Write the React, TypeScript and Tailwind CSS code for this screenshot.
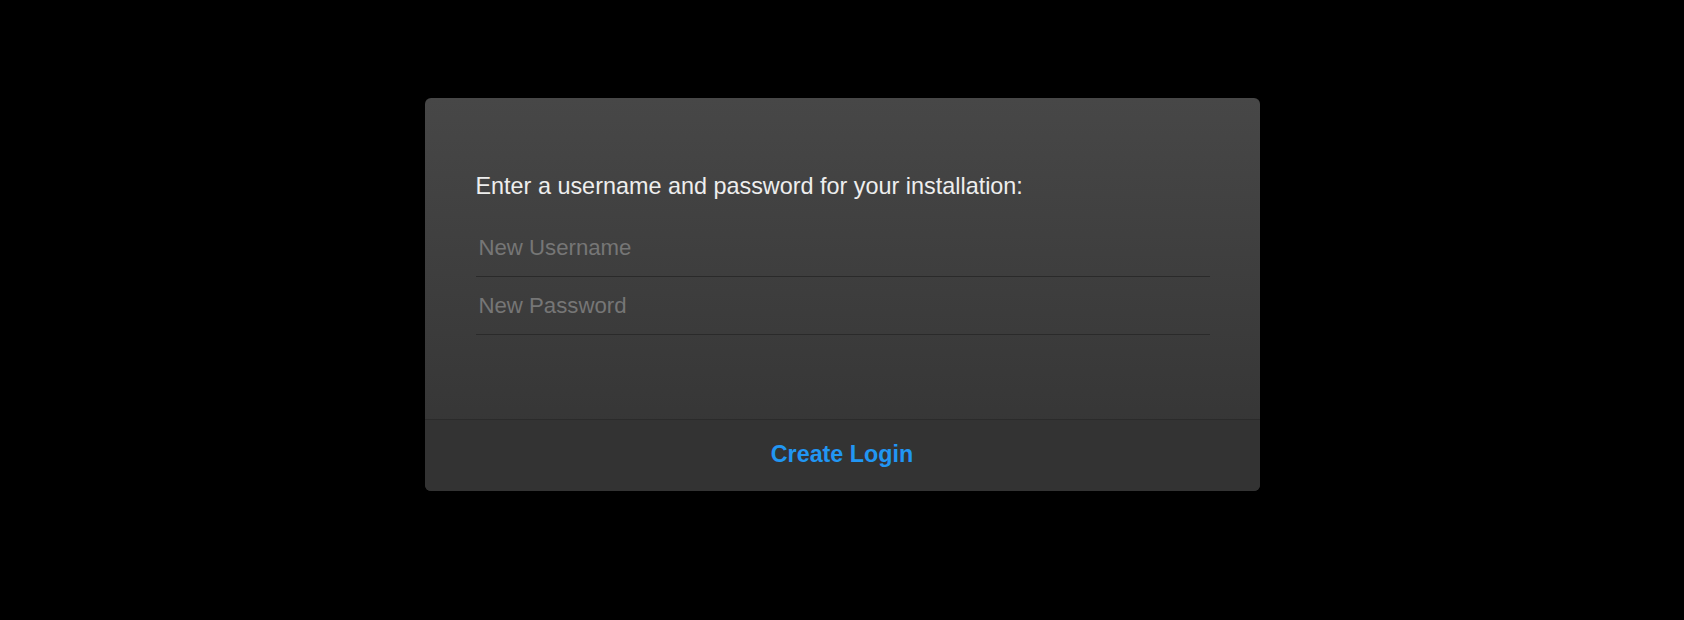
import React from "react";

const App: React.FC = () => {
  return (
    <div
      className="min-h-[620px] w-full bg-black pt-[98px]"
      style={{ fontFamily: '"Liberation Sans", Arial, sans-serif' }}
    >
      <div className="mx-auto w-[835px] overflow-hidden rounded-[6px] bg-gradient-to-b from-[#474747] to-[#333333]">
        <form className="pt-[75px] pr-[50px] pb-[84px] pl-[51px]">
          <p className="text-[23.4px] leading-[26px] text-[#eeeeee]">
            Enter a username and password for your installation:
          </p>
          <div className="mt-[20px] flex flex-col">
            <input
              type="text"
              placeholder="New Username"
              className="h-[58px] border-b border-[#2a2a2a] bg-transparent px-[3px] text-[22.2px] text-[#eeeeee] outline-none placeholder:text-[#767676]"
            />
            <input
              type="password"
              placeholder="New Password"
              className="h-[58px] border-b border-[#2a2a2a] bg-transparent px-[3px] text-[22.2px] text-[#eeeeee] outline-none placeholder:text-[#767676]"
            />
          </div>
        </form>
        <div className="flex h-[72px] items-center justify-center border-t border-[#2b2b2b] bg-[#333333] pb-[4px]">
          <button
            type="button"
            className="text-[23.3px] font-bold leading-[26px] text-[#2196f3]"
          >
            Create Login
          </button>
        </div>
      </div>
    </div>
  );
};

export default App;
